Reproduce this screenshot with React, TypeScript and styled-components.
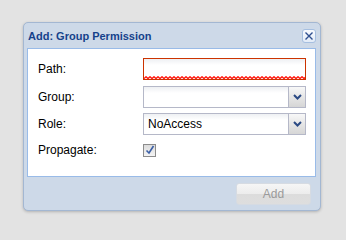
import styled, { createGlobalStyle } from 'styled-components';

const GlobalStyle = createGlobalStyle`
  html, body {
    margin: 0;
    padding: 0;
    background: #e3e3e3;
    font-family: "Liberation Sans", Arial, sans-serif;
  }
`;

const Page = styled.div`
  width: 346px;
  height: 234px;
  padding: 22px 0 0 23px;
  box-sizing: border-box;
`;

const Window = styled.div`
  width: 298px;
  height: 189px;
  box-sizing: border-box;
  border: 1px solid #a3b7d2;
  border-radius: 5px;
  background: #cdd9e8;
  box-shadow: 0 1px 3px rgba(0, 0, 0, 0.22);
  padding: 0 4px 0 3px;
  display: flex;
  flex-direction: column;
`;

const Header = styled.div`
  height: 25px;
  display: flex;
  align-items: center;
  justify-content: space-between;
  padding-left: 1px;
`;

const Title = styled.span`
  font-size: 11px;
  font-weight: bold;
  color: #15428b;
`;

const CloseButton = styled.div`
  width: 14px;
  height: 14px;
  box-sizing: border-box;
  border: 1px solid #a6bfe0;
  border-radius: 3px;
  background: linear-gradient(#f7faff, #e2ebf7);
  display: flex;
  align-items: center;
  justify-content: center;
  margin-top: 1px;
`;

const Body = styled.div`
  height: 129px;
  box-sizing: border-box;
  background: #fff;
  border: 1px solid #99bbe8;
  padding: 9px 9px 0 10px;
  display: flex;
  flex-direction: column;
`;

const Row = styled.div<{ $gap: number }>`
  display: flex;
  align-items: center;
  margin-bottom: ${(p) => p.$gap}px;
`;

const Label = styled.label`
  width: 105px;
  font-size: 12px;
  color: #000;
`;

const Field = styled.div<{ $invalid?: boolean }>`
  position: relative;
  width: 163px;
  height: 22px;
  box-sizing: border-box;
  border: 1px solid ${(p) => (p.$invalid ? '#cc3300' : '#b5b8c8')};
  background: linear-gradient(#eef0f3, #ffffff 6px);
  display: flex;
  align-items: center;
  font-size: 12px;
  color: #000;
`;

const InvalidLine = styled.svg`
  position: absolute;
  left: 0;
  bottom: 0;
`;

const FieldText = styled.span`
  flex: 1;
  padding-left: 4px;
`;

const Trigger = styled.div`
  width: 17px;
  align-self: stretch;
  box-sizing: border-box;
  border-left: 1px solid #b5b8c8;
  background: linear-gradient(#f8f8f8, #e6e6e6 50%, #d6d6d6);
  display: flex;
  align-items: center;
  justify-content: center;
`;

const Checkbox = styled.div`
  width: 13px;
  height: 13px;
  box-sizing: border-box;
  border: 1px solid #8c8c8c;
  background: linear-gradient(#dcdcdc, #f4f4f4);
  display: flex;
  align-items: center;
  justify-content: center;
`;

const Footer = styled.div`
  flex: 1;
  display: flex;
  justify-content: flex-end;
  align-items: flex-start;
  padding: 6px 5px 0 0;
`;

const Button = styled.div`
  width: 75px;
  height: 22px;
  box-sizing: border-box;
  border: 1px solid #d6dbe2;
  border-radius: 3px;
  background: linear-gradient(#f6f6f6, #ececec 50%, #dcdcdc 50%, #dedede);
  color: #9a9a9a;
  font-size: 12px;
  display: flex;
  align-items: center;
  justify-content: center;
`;

const Chevron = () => (
  <svg width="9" height="6" viewBox="0 0 9 6">
    <path d="M1 1 L4.5 4.5 L8 1" fill="none" stroke="#2b4a84" strokeWidth="2" />
  </svg>
);

const zigzag = Array.from({ length: 82 }, (_, i) => `${i * 2},${i % 2 ? 0.8 : 2.6}`).join(' ');

export default function App() {
  return (
    <>
      <GlobalStyle />
      <Page>
        <Window>
          <Header>
            <Title>Add: Group Permission</Title>
            <CloseButton>
              <svg width="10" height="10" viewBox="0 0 10 10">
                <path d="M1.5 1.5 L8.5 8.5 M8.5 1.5 L1.5 8.5" stroke="#2f4f8f" strokeWidth="1.4" />
              </svg>
            </CloseButton>
          </Header>
          <Body>
            <Row $gap={6}>
              <Label>Path:</Label>
              <Field $invalid>
                <InvalidLine width="161" height="3" viewBox="0 0 161 3">
                  <polyline points={zigzag} fill="none" stroke="#ff1a10" strokeWidth="1.4" />
                </InvalidLine>
              </Field>
            </Row>
            <Row $gap={5}>
              <Label>Group:</Label>
              <Field>
                <FieldText />
                <Trigger>
                  <Chevron />
                </Trigger>
              </Field>
            </Row>
            <Row $gap={8}>
              <Label>Role:</Label>
              <Field>
                <FieldText>NoAccess</FieldText>
                <Trigger>
                  <Chevron />
                </Trigger>
              </Field>
            </Row>
            <Row $gap={0}>
              <Label>Propagate:</Label>
              <Checkbox>
                <svg width="10" height="10" viewBox="0 0 10 10">
                  <path d="M1.5 5.5 L4 8 L8.5 1" fill="none" stroke="#3b5fa6" strokeWidth="1.6" />
                </svg>
              </Checkbox>
            </Row>
          </Body>
          <Footer>
            <Button>Add</Button>
          </Footer>
        </Window>
      </Page>
    </>
  );
}
